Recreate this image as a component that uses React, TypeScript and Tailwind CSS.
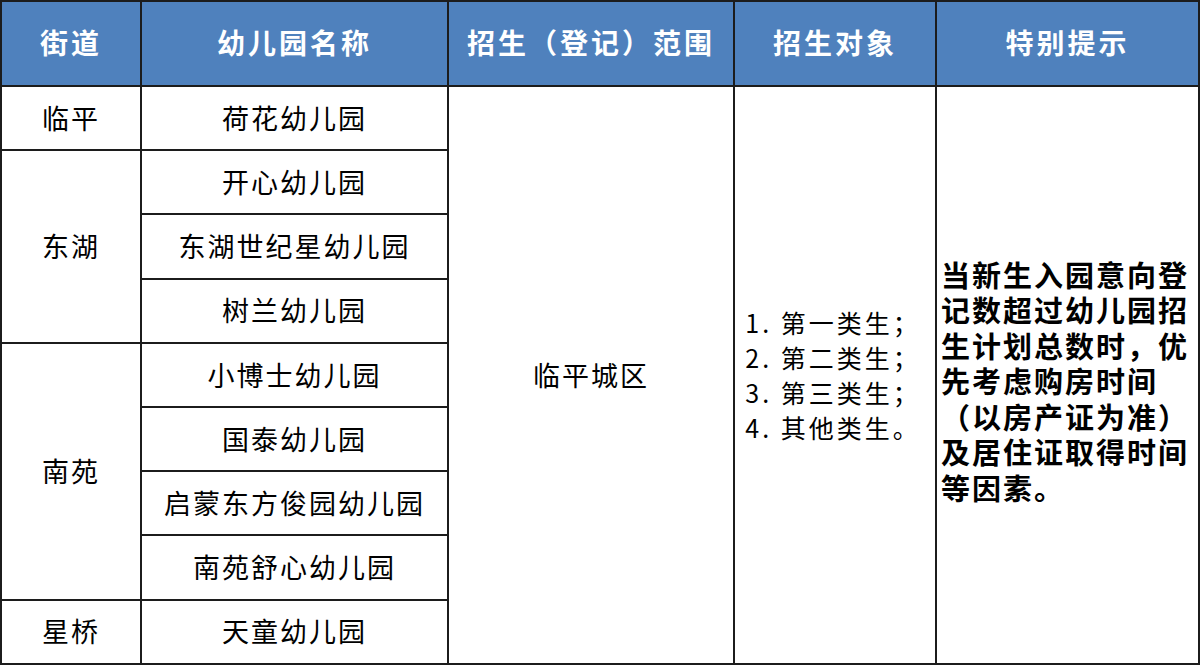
const headers = ['街道', '幼儿园名称', '招生（登记）范围', '招生对象', '特别提示'];

const groups = [
  { street: '临平', schools: ['荷花幼儿园'] },
  { street: '东湖', schools: ['开心幼儿园', '东湖世纪星幼儿园', '树兰幼儿园'] },
  { street: '南苑', schools: ['小博士幼儿园', '国泰幼儿园', '启蒙东方俊园幼儿园', '南苑舒心幼儿园'] },
  { street: '星桥', schools: ['天童幼儿园'] },
];

const targets = ['1. 第一类生；', '2. 第二类生；', '3. 第三类生；', '4. 其他类生。'];

const cell = 'border-2 border-[#1c1c1c] text-center align-middle';

export default function App() {
  const rows: { street?: string; span?: number; school: string }[] = [];
  for (const g of groups) {
    g.schools.forEach((s, i) => {
      rows.push(i === 0 ? { street: g.street, span: g.schools.length, school: s } : { school: s });
    });
  }

  return (
    <div className="w-[1200px] h-[666px] bg-white overflow-hidden font-['Noto_Sans_CJK_SC',sans-serif]">
      <table className="table-fixed border-collapse w-[1198px] text-black">
        <colgroup>
          <col className="w-[140px]" />
          <col className="w-[307px]" />
          <col className="w-[286px]" />
          <col className="w-[202px]" />
          <col className="w-[263px]" />
        </colgroup>
        <thead>
          <tr className="h-[85px] bg-[#4f81bd]">
            {headers.map((h) => (
              <th key={h} className={`${cell} text-white font-bold text-[28px] tracking-[3px] pb-[4px]`}>
                {h}
              </th>
            ))}
          </tr>
        </thead>
        <tbody>
          {rows.map((r, i) => (
            <tr key={r.school} className="h-[64.2px]">
              {r.street && (
                <td rowSpan={r.span} className={`${cell} text-[27px] tracking-[2px]`}>
                  {r.street}
                </td>
              )}
              <td className={`${cell} text-[27px] tracking-[2px]`}>{r.school}</td>
              {i === 0 && (
                <>
                  <td rowSpan={9} className={`${cell} text-[27px] tracking-[2px]`}>
                    临平城区
                  </td>
                  <td rowSpan={9} className={`${cell}`}>
                    <div className="inline-block text-left text-[25px] leading-[35px] tracking-[3px] pr-[4px]">
                      {targets.map((t) => (
                        <div key={t}>{t}</div>
                      ))}
                    </div>
                  </td>
                  <td rowSpan={9} className={`${cell} text-left pl-[4px] pr-0`}>
                    <div className="text-[29px] leading-[35.5px] font-bold tracking-[2px] pt-[12px]">
                      当新生入园意向登记数超过幼儿园招生计划总数时，优先考虑购房时间（以房产证为准）及居住证取得时间等因素。
                    </div>
                  </td>
                </>
              )}
            </tr>
          ))}
        </tbody>
      </table>
    </div>
  );
}
